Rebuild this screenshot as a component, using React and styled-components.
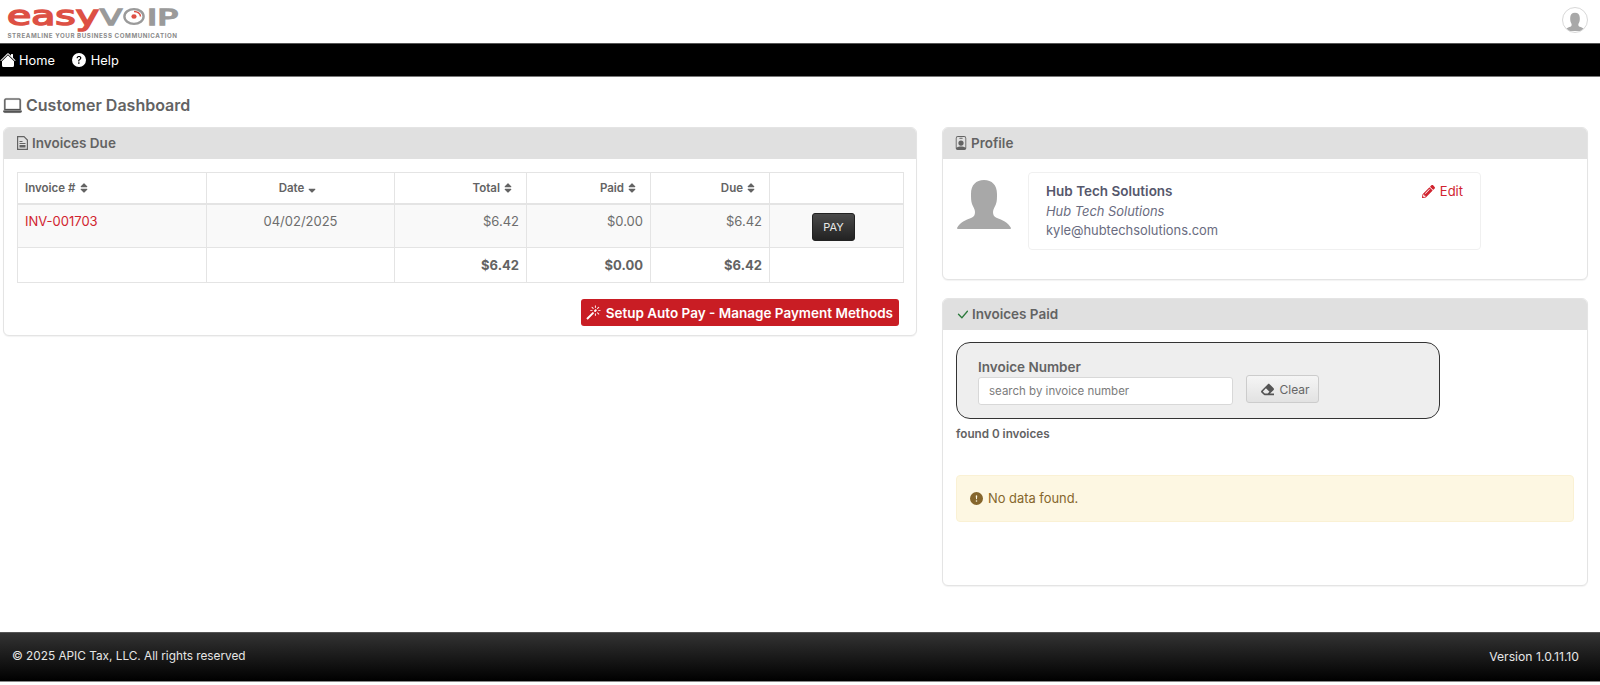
import React from 'react';
import styled, { createGlobalStyle } from 'styled-components';
import { FaSort, FaSortDown, FaPencilAlt, FaEraser } from 'react-icons/fa';
import {
  BsHouseFill,
  BsQuestionCircleFill,
  BsLaptop,
  BsPersonBadge,
  BsCheckLg,
  BsMagic,
  BsExclamationCircleFill,
} from 'react-icons/bs';

const red = '#c91d24';
const linkRed = '#d1242f';
const text = '#636363';
const line = '#e4e4e4';

const GlobalStyle = createGlobalStyle`
  html, body { margin: 0; padding: 0; background: #fff; }
  body {
    font-family: Inter, "Liberation Sans", sans-serif;
    font-size: 13px;
    color: ${text};
  }
  * { box-sizing: border-box; }
`;

const Page = styled.div`
  height: 685px;
  display: flex;
  flex-direction: column;
  overflow: hidden;
`;

const Header = styled.header`
  height: 43px;
  flex: none;
  display: flex;
  align-items: flex-start;
  justify-content: space-between;
  padding: 0 12px 0 7px;
`;

const Nav = styled.nav`
  height: 34px;
  flex: none;
  background: #000;
  border-top: 1px solid #555;
  border-bottom: 1px solid #777;
  display: flex;
  align-items: center;
  gap: 17px;
  color: #fff;
`;

const NavItem = styled.a`
  display: flex;
  align-items: center;
  gap: ${(p) => p.$gap}px;
  font-size: 12.8px;
  color: #fff;
  svg { font-size: ${(p) => p.$icon}px; }
`;

const Main = styled.main`
  flex: 1;
  padding: 16px 12px 0 3px;
`;

const PageTitle = styled.h1`
  margin: 0 0 10px;
  height: 24px;
  display: flex;
  align-items: center;
  gap: 4px;
  font-size: 16px;
  font-weight: 600;
  color: ${text};
  svg { font-size: 19px; color: #555; stroke: #555; stroke-width: 0.3; }
`;

const Columns = styled.div`
  display: grid;
  grid-template-columns: 914px 646px;
  column-gap: 25px;
  align-items: start;
`;

const Stack = styled.div`
  display: flex;
  flex-direction: column;
  gap: 18px;
`;

const Card = styled.section`
  border: 1px solid ${line};
  border-radius: 6px;
  box-shadow: 0 1px 1px rgba(0, 0, 0, 0.05);
  height: ${(p) => p.$height}px;
  overflow: hidden;
  background: #fff;
`;

const CardHeader = styled.div`
  height: 31px;
  padding: 0 0 1px 13px;
  background: #e0e0e0;
  display: flex;
  align-items: center;
  gap: 4px;
  font-size: 13.5px;
  font-weight: 600;
  color: ${text};
`;

const ProfileIcon = styled(BsPersonBadge)`
  font-size: 14px;
  margin: 0 -1px 0 -2px;
`;

const CheckIcon = styled(BsCheckLg)`
  font-size: 15px;
  margin: 0 -2px 0 -1px;
  color: #2c7a3c;
`;

const CardBody = styled.div`
  padding: ${(p) => p.$top || 13}px 13px 0;
`;

const Table = styled.table`
  width: 886px;
  table-layout: fixed;
  border-collapse: collapse;
  border: 1px solid ${line};
  font-size: 13px;
`;

const Th = styled.th`
  height: 31px;
  padding: 0 7px;
  border: 1px solid ${line};
  border-bottom-width: 2px;
  font-size: 11.5px;
  font-weight: 600;
  color: ${text};
  text-align: ${(p) => p.$align || 'left'};
  padding-right: ${(p) => (p.$align === 'right' ? '12px' : p.$align === 'center' ? '11px' : '7px')};
  svg { font-size: 12px; vertical-align: -2px; margin-left: ${(p) => (p.$align ? '2px' : '3px')}; }
`;

const Row = styled.tr`
  background: ${(p) => (p.$striped ? '#f9f9f9' : '#fff')};
`;

const Td = styled.td`
  height: 44px;
  padding: 8px 7px 6px;
  border: 1px solid ${line};
  vertical-align: top;
  line-height: 16px;
  color: #6d6d6d;
  text-align: ${(p) => p.$align || 'left'};
`;

const TotalCell = styled.td`
  height: 35px;
  padding: 0 7px;
  border: 1px solid ${line};
  font-weight: 700;
  color: ${text};
  text-align: right;
`;

const InvoiceLink = styled.a`
  color: ${linkRed};
`;

const PayButton = styled.button`
  display: inline-block;
  vertical-align: top;
  width: 43px;
  height: 28px;
  margin-right: 6px;
  padding: 0;
  border: 1px solid #222;
  border-radius: 3px;
  background: linear-gradient(#4a4a4a, #222);
  color: #e8e8e8;
  font: 400 11px Inter, "Liberation Sans", sans-serif;
`;

const ActionRow = styled.div`
  display: flex;
  justify-content: flex-end;
  padding: 16px 4px 0 0;
`;

const AutoPayButton = styled.button`
  height: 27px;
  padding: 0 6px;
  display: flex;
  align-items: center;
  gap: 5px;
  border: 0;
  border-radius: 3px;
  background: ${red};
  color: #fff;
  font: 600 13.5px Inter, "Liberation Sans", sans-serif;
  svg { font-size: 15px; margin-left: -1px; }
`;

const ProfileRow = styled.div`
  display: flex;
  gap: 17px;
`;

const AvatarBox = styled.div`
  width: 55px;
  padding: 6px 0 0 1px;
  flex: none;
`;

const ProfileBox = styled.div`
  width: 453px;
  height: 78px;
  padding: 9px 17px;
  display: flex;
  justify-content: space-between;
  border: 1px solid #f0f0f0;
  border-radius: 4px;
  line-height: 19.5px;
  font-size: 12.9px;
  color: #6a6c80;
`;

const ProfileName = styled.div`
  font-size: 13.5px;
  font-weight: 600;
  color: #55576c;
`;

const ProfileCompany = styled.div`
  font-style: italic;
`;

const EditLink = styled.a`
  display: flex;
  align-items: flex-start;
  gap: 5px;
  font-size: 13px;
  color: ${linkRed};
  svg { margin-top: 3px; font-size: 13px; }
`;

const SearchPanel = styled.div`
  width: 484px;
  height: 77px;
  padding: 14px 21px 0;
  display: flex;
  align-items: flex-start;
  gap: 13px;
  background: #eee;
  border: 1px solid #333;
  border-radius: 14px;
`;

const Label = styled.label`
  display: block;
  font-size: 13.5px;
  font-weight: 600;
  line-height: 20px;
`;

const SearchInput = styled.input`
  display: block;
  width: 255px;
  height: 28px;
  padding: 0 10px;
  border: 1px solid #d8d8d8;
  border-radius: 3px;
  background: #fff;
  font: 400 11.5px Inter, "Liberation Sans", sans-serif;
  &::placeholder { color: #7c7c7c; opacity: 1; }
`;

const ClearButton = styled.button`
  width: 73px;
  height: 28px;
  margin-top: 18px;
  padding: 0 0 0 6px;
  display: flex;
  align-items: center;
  justify-content: center;
  gap: 5px;
  border: 1px solid #ccc;
  border-radius: 3px;
  background: linear-gradient(#f5f5f5, #e2e2e2);
  color: #666;
  font: 400 12px Inter, "Liberation Sans", sans-serif;
  svg { font-size: 13px; color: #555; }
`;

const FoundText = styled.div`
  margin-top: 7px;
  font-size: 11.7px;
  font-weight: 600;
  line-height: 16px;
`;

const Alert = styled.div`
  margin-top: 33px;
  width: 618px;
  height: 47px;
  display: flex;
  align-items: center;
  gap: 5px;
  padding-left: 13px;
  background: #fdf7e2;
  border: 1px solid #faf1d4;
  border-radius: 4px;
  font-size: 12.9px;
  color: #85662c;
  svg { font-size: 13px; }
`;

const Footer = styled.footer`
  height: 50px;
  flex: none;
  margin-bottom: 3px;
  padding: 0 21px 2px 12px;
  display: flex;
  align-items: center;
  justify-content: space-between;
  background: linear-gradient(#333, #000);
  border-top: 1px solid #555;
  border-bottom: 1px solid #888;
  color: #e6e6e6;
  font-size: 11.8px;
`;

const Version = styled.span`
  font-size: 12.2px;
`;

const PersonShape = ({ size, color }) => (
  <svg width={size} height={size} viewBox="0 0 54 50" aria-hidden="true">
    <path
      fill={color}
      d="M27 0c8 0 13 5 13 14 0 4 0 7-1 10-1 3-3 5-3 8 0 3 1 5 4 6 5 2 11 4 14 10 0 1-1 1-2 1H2c-1 0-2 0-2-1 3-6 9-8 14-10 3-1 4-3 4-6 0-3-2-5-3-8-1-3-1-6-1-10C14 5 19 0 27 0z"
    />
  </svg>
);

const DocIcon = () => (
  <svg width="11" height="14" viewBox="0 0 11 14" aria-hidden="true">
    <path fill="none" stroke="currentColor" strokeWidth="1.2" d="M1 .6h6l3.4 3.4v9.4H.6V.6z" />
    <path fill="currentColor" d="M2.5 5h3v1h-3zM2.5 7h6v1h-6zM2.5 9h6v2.5h-6z" />
  </svg>
);

const UserBadge = styled.div`
  width: 26px;
  height: 26px;
  margin-top: 7px;
  display: flex;
  align-items: flex-end;
  justify-content: center;
  overflow: hidden;
  border: 1px solid #d8d8d8;
  border-radius: 50%;
`;

const LogoWord = styled.text`
  font-family: "DejaVu Sans", sans-serif;
  font-weight: 400;
  stroke-width: 1.5;
`;

const LogoTag = styled.text`
  font-family: Inter, sans-serif;
  font-weight: 700;
`;

const Logo = () => (
  <svg width="172" height="42" viewBox="0 0 172 42" role="img">
    <LogoWord x="0" y="25" fontSize="27" fill="#dd5044" stroke="#dd5044" textLength="92" lengthAdjust="spacingAndGlyphs">easy</LogoWord>
    <LogoWord x="93" y="25" fontSize="21.5" fill="#9a9a9a" stroke="#9a9a9a" textLength="22" lengthAdjust="spacingAndGlyphs">V</LogoWord>
    <ellipse cx="127" cy="16.5" rx="9.6" ry="7.4" fill="none" stroke="#9a9a9a" strokeWidth="2.4" />
    <path d="M127 11.5a6.5 5 0 0 1 6.5 5" fill="none" stroke="#dd5044" strokeWidth="1.5" />
    <ellipse cx="127" cy="16.5" rx="2.6" ry="2.2" fill="#dd5044" />
    <LogoWord x="140" y="25" fontSize="21.5" fill="#9a9a9a" stroke="#9a9a9a" textLength="31" lengthAdjust="spacingAndGlyphs">IP</LogoWord>
    <LogoTag x="0.5" y="38.2" fontSize="6.2" fill="#8a8a8a" textLength="169.5" lengthAdjust="spacing">STREAMLINE YOUR BUSINESS COMMUNICATION</LogoTag>
  </svg>
);

export default function App() {
  return (
    <Page>
      <GlobalStyle />
      <Header>
        <Logo />
        <UserBadge>
          <PersonShape size={20} color="#a8a8a8" />
        </UserBadge>
      </Header>
      <Nav>
        <NavItem $icon={16} $gap={3}><BsHouseFill />Home</NavItem>
        <NavItem $icon={14} $gap={5}><BsQuestionCircleFill />Help</NavItem>
      </Nav>
      <Main>
        <PageTitle><BsLaptop />Customer Dashboard</PageTitle>
        <Columns>
          <Card $height={209}>
            <CardHeader><DocIcon />Invoices Due</CardHeader>
            <CardBody>
              <Table>
                <colgroup>
                  <col width="189" />
                  <col width="188" />
                  <col width="132" />
                  <col width="124" />
                  <col width="119" />
                  <col width="134" />
                </colgroup>
                <thead>
                  <tr>
                    <Th>Invoice #<FaSort /></Th>
                    <Th $align="center">Date<FaSortDown /></Th>
                    <Th $align="right">Total<FaSort /></Th>
                    <Th $align="right">Paid<FaSort /></Th>
                    <Th $align="right">Due<FaSort /></Th>
                    <Th />
                  </tr>
                </thead>
                <tbody>
                  <Row $striped>
                    <Td><InvoiceLink>INV-001703</InvoiceLink></Td>
                    <Td $align="center">04/02/2025</Td>
                    <Td $align="right">$6.42</Td>
                    <Td $align="right">$0.00</Td>
                    <Td $align="right">$6.42</Td>
                    <Td $align="center"><PayButton>PAY</PayButton></Td>
                  </Row>
                  <Row>
                    <TotalCell />
                    <TotalCell />
                    <TotalCell>$6.42</TotalCell>
                    <TotalCell>$0.00</TotalCell>
                    <TotalCell>$6.42</TotalCell>
                    <TotalCell />
                  </Row>
                </tbody>
              </Table>
              <ActionRow>
                <AutoPayButton><BsMagic />Setup Auto Pay - Manage Payment Methods</AutoPayButton>
              </ActionRow>
            </CardBody>
          </Card>
          <Stack>
            <Card $height={153}>
              <CardHeader><ProfileIcon />Profile</CardHeader>
              <CardBody>
                <ProfileRow>
                  <AvatarBox><PersonShape size={54} color="#a8a8a8" /></AvatarBox>
                  <ProfileBox>
                    <div>
                      <ProfileName>Hub Tech Solutions</ProfileName>
                      <ProfileCompany>Hub Tech Solutions</ProfileCompany>
                      <div>kyle@hubtechsolutions.com</div>
                    </div>
                    <EditLink><FaPencilAlt />Edit</EditLink>
                  </ProfileBox>
                </ProfileRow>
              </CardBody>
            </Card>
            <Card $height={288}>
              <CardHeader><CheckIcon />Invoices Paid</CardHeader>
              <CardBody $top={12}>
                <SearchPanel>
                  <div>
                    <Label>Invoice Number</Label>
                    <SearchInput placeholder="search by invoice number" />
                  </div>
                  <ClearButton><FaEraser />Clear</ClearButton>
                </SearchPanel>
                <FoundText>found 0 invoices</FoundText>
                <Alert><BsExclamationCircleFill />No data found.</Alert>
              </CardBody>
            </Card>
          </Stack>
        </Columns>
      </Main>
      <Footer>
        <span>© 2025 APIC Tax, LLC. All rights reserved</span>
        <Version>Version 1.0.11.10</Version>
      </Footer>
    </Page>
  );
}
